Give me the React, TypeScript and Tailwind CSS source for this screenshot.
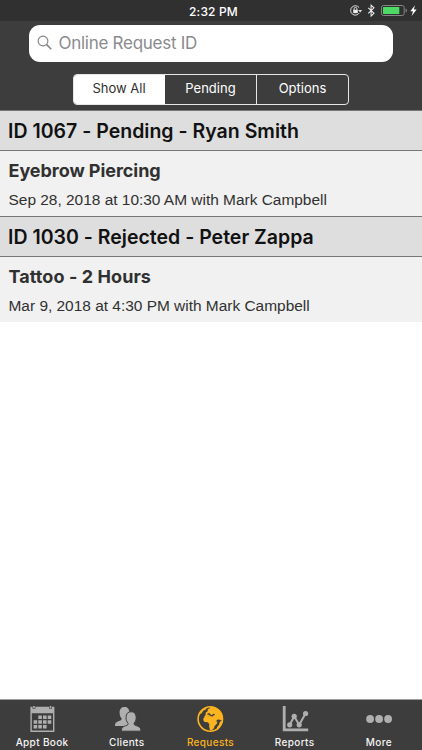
import React from "react";

const inter = "font-['Inter',sans-serif]";

type Request = { title: string; service: string; serviceClass: string; detail: string };

const requests: Request[] = [
  {
    title: "ID 1067 - Pending - Ryan Smith",
    service: "Eyebrow Piercing",
    serviceClass: "tracking-[-0.05px]",
    detail: "Sep 28, 2018 at 10:30 AM with Mark Campbell",
  },
  {
    title: "ID 1030 - Rejected - Peter Zappa",
    service: "Tattoo - 2 Hours",
    serviceClass: "tracking-[0.08px]",
    detail: "Mar 9, 2018 at 4:30 PM with Mark Campbell",
  },
];

function StatusBar() {
  return (
    <header className="relative flex h-[21px] items-center justify-center bg-[#303030] text-white">
      <span className="pl-[5px] pt-[2px] text-[12px] font-medium leading-[20px] tracking-[0.15px]">2:32 PM</span>
      <svg className="absolute right-0 top-0" width="82" height="21" viewBox="0 0 82 21" fill="none">
        <path d="M19.1 7.6A4.7 4.7 0 1 0 19.3 13" stroke="#ddd" strokeWidth="1" />
        <path d="M18.1 9.9h4.1l-2 2.5z" fill="#ddd" />
        <rect x="13.2" y="9.8" width="4.6" height="3.3" fill="#eee" />
        <path d="M14.1 10V8.8a1.4 1.4 0 0 1 2.8 0V10" stroke="#eee" strokeWidth=".9" />
        <path d="M28.3 7.8l5.7 5.5-2.9 2.7V5.1L34 7.8l-5.7 5.5" stroke="#eee" strokeWidth="1.05" />
        <rect x="41.5" y="5.5" width="22.7" height="10" rx="2" stroke="#858585" />
        <rect x="43" y="7" width="16.3" height="7" rx=".6" fill="#4cd964" />
        <path d="M65.6 8.6q1.4.4 1.4 1.9t-1.4 1.9z" fill="#858585" />
        <path d="M75 5.2l-4.7 6h2.7l-1.4 4.7 5-6.4h-2.8z" fill="#fff" />
      </svg>
    </header>
  );
}

function Controls() {
  return (
    <section className="flex h-[89px] flex-col items-center bg-[#3d3d3d] pt-[4px]">
      <div className="flex h-[36.5px] w-[364px] items-center rounded-[11px] bg-white pl-[8px] text-[#8a8a8e]">
        <svg width="16" height="16" viewBox="0 0 16 16" fill="none" stroke="#828286" strokeWidth="1.1">
          <circle cx="6" cy="6" r="4.9" />
          <path d="M9.6 9.6l4.7 4.7" strokeWidth="1.5" />
        </svg>
        <span className="ml-[5.5px] text-[17px] leading-[22px] tracking-[-0.27px]">Online Request ID</span>
      </div>
      <div className="mt-[12px] flex h-[31px] w-[276px] overflow-hidden rounded-[4px] border border-[#e6e6e6] text-[13px] text-white">
        <button className="w-[91px] bg-white pr-px text-[#303030]">Show All</button>
        <button className="w-[91px]">Pending</button>
        <button className="w-[92px] border-l border-[#e6e6e6]">Options</button>
      </div>
    </section>
  );
}

function CalendarIcon() {
  return (
    <svg width="28" height="28" viewBox="0 0 28 28" fill="#afafaf">
      <path fillRule="evenodd" d="M2.4 2.8h2.2v2h2.8v-2h13.7v2h2.8v-2h2.5v25.1h-24zM3.8 9.2v17.2H25V9.2z" />
      <path d="M5.2 2h1.6v2.2H5.2zM21.7 2h1.6v2.2h-1.6z" />
      <path d="M10.3 11.5h3.6v3.6h-3.6zM15 11.5h3.6v3.6H15zM19.7 11.5h3.6v3.6h-3.6zM5.6 16.2h3.6v3.6H5.6zM10.3 16.2h3.6v3.6h-3.6zM15 16.2h3.6v3.6H15zM19.7 16.2h3.6v3.6h-3.6zM5.6 20.9h3.6v3.6H5.6zM10.3 20.9h3.6v3.6h-3.6zM15 20.9h3.6v3.6H15z" />
    </svg>
  );
}

function ClientsIcon() {
  return (
    <svg width="28" height="28" viewBox="0 0 28 28" fill="#afafaf">
      <path d="M2 22c0-3.6 1.4-4.2 5.3-5.6.9-.4 1.3-.9 1.3-2C7.3 13 6.6 11.2 6.6 8.5 6.6 5 8.5 3 11.5 3s4.9 2 4.900 5.500c0 2.600-.8 4.500-2 5.900 0 1.200.4 1.600 1.300 2C18.500 17.500 19 18.500 19 22z" />
      <path d="M8.300 27.200c0-3.800 1.500-4.500 5.600-5.900.9-.3 1.300-.9 1.300-2-1.500-1.400-2.200-3.300-2.200-5.800 0-3.800 2-5.800 5.100-5.800s5.100 2 5.100 5.800c0 2.500-.8 4.400-2.200 5.800 0 1.100.4 1.700 1.300 2 4.100 1.400 5.600 2.100 5.600 5.900z" stroke="#3d3d3d" strokeWidth="1" />
    </svg>
  );
}

function GlobeIcon() {
  return (
    <svg width="28" height="28" viewBox="0 0 28 28" fill="none">
      <circle cx="14.3" cy="15" r="12.2" stroke="#fbb320" strokeWidth="1.6" />
      <g fill="#fbb320">
        <path d="M3.5 10.5C4.900 6.500 8 3.700 12 2.800l-2.300 2.700-2.500 1.200-1.500 2.600z" />
        <path d="M14.500 2.700c4.500 0 8.500 2.200 10.700 6 1 1.900 1.500 4 1.400 6.300l-1.200 1.600-2.200-1-2 .1-1.800 2.300-1.500-.8-1-3.400-2.100.4-1.400-1.400-1.800-.3-1.800.9-1.600-1 1.500-1.700-.1-2 2-1.500.2-2.200 2.100-.8z" />
        <path d="M7.500 14l2.500-2 4.300.8 3.300.9 1.600 3.500 2.200.2-.5 2.300-2.300 2.200-.7 2.300-2.200 2.200-1.800-.5-.8-3.800.2-2.100-1.500-1.700-3.100-.2-1.400-1.800z" />
        <path d="M24 17.500l2.300-.8c-.6 3.300-2.300 6-5 7.900l-.4-1.300 2-2.300z" />
      </g>
      <path d="M11.500 10.400l1.600-.5 1.500 1.500 1.700.3 1.300-1.200 1.100.1" stroke="#3d3d3d" strokeWidth="1.4" />
    </svg>
  );
}

function ReportsIcon() {
  return (
    <svg width="28" height="28" viewBox="0 0 28 28" fill="#afafaf" stroke="#afafaf">
      <path d="M3.2 2v23.9H27.2" fill="none" strokeWidth="2.8" />
      <path d="M8.7 20.8l4.5-8.300 5 8.300L24.600 9.500" fill="none" strokeWidth="2" />
      <g stroke="none"><circle cx="8.7" cy="20.8" r="2.6" /><circle cx="13.2" cy="12.3" r="2.6" /><circle cx="18.2" cy="20.8" r="2.6" /><circle cx="24.6" cy="9.5" r="2.6" /></g>
    </svg>
  );
}

function MoreIcon() {
  return (
    <svg width="28" height="28" viewBox="0 0 28 28" fill="#afafaf">
      <circle cx="5.1" cy="15" r="3.9" /><circle cx="14.1" cy="15" r="3.9" /><circle cx="23.1" cy="15" r="3.9" />
    </svg>
  );
}

const tabs = [
  { label: "Appt Book", Icon: CalendarIcon, itemClass: "text-[#f4f4f4]" },
  { label: "Clients", Icon: ClientsIcon, itemClass: "pl-px text-[#f4f4f4]" },
  { label: "Requests", Icon: GlobeIcon, itemClass: "text-[#fbb320]" },
  { label: "Reports", Icon: ReportsIcon, itemClass: "text-[#f4f4f4]" },
  { label: "More", Icon: MoreIcon, itemClass: "text-[#f4f4f4]" },
];

export default function App() {
  return (
    <div className={`${inter} flex h-[750px] w-[422px] flex-col overflow-hidden bg-white`}>
      <StatusBar />
      <Controls />
      <main className="flex-1">
        {requests.map((r) => (
          <article key={r.title} className="h-[106px]">
            <h2 className="h-[41px] border-y border-[#777] bg-[#dedede] pl-[8px] pt-px text-[19.5px] font-semibold leading-[39px] tracking-[0.01px] text-[#111]">{r.title}</h2>
            <div className="h-[65px] bg-[#f1f1f1] pl-[8.5px] pt-[8px] text-[#303030]">
              <h3 className={`text-[18px] font-bold leading-[24px] ${r.serviceClass}`}>{r.service}</h3>
              <p className="mt-[6px] font-['Liberation_Sans',Arial,sans-serif] text-[15.44px] leading-[22px]">{r.detail}</p>
            </div>
          </article>
        ))}
      </main>
      <nav className="flex h-[51px] border-t border-[#a0a0a0] bg-[#3d3d3d]">
        {tabs.map(({ label, Icon, itemClass }) => (
          <button key={label} className={`flex w-[84.2px] flex-col items-center pt-[4px] ${itemClass}`}>
            <Icon />
            <span className="mt-[3px] text-[10px] font-medium leading-[14px] tracking-[0.35px]">{label}</span>
          </button>
        ))}
      </nav>
    </div>
  );
}
